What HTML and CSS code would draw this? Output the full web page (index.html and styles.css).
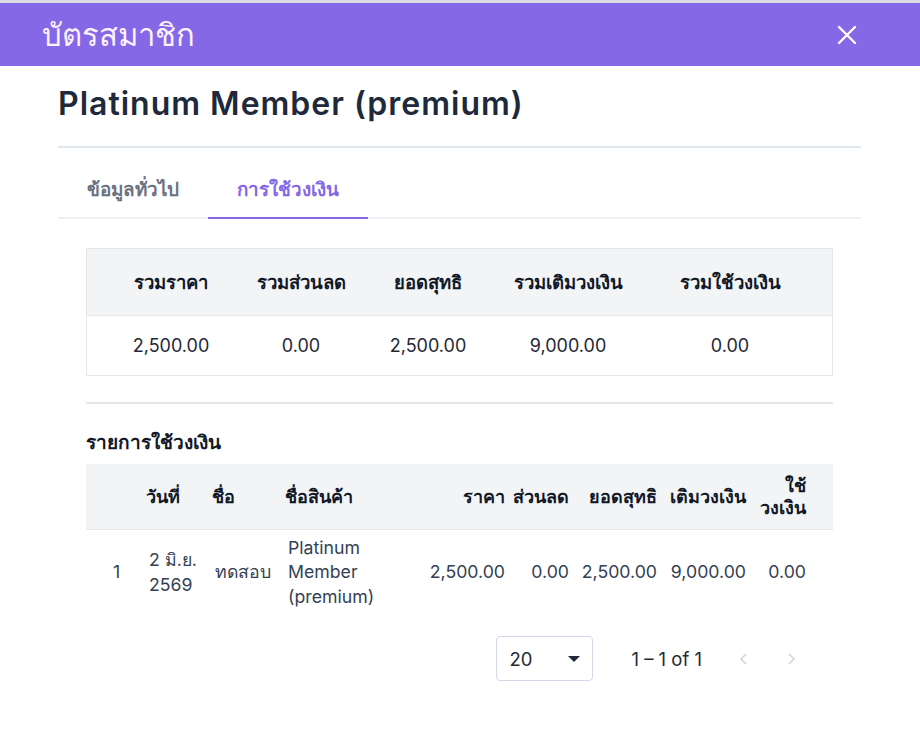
FILE: index.html
```html
<!DOCTYPE html>
<html lang="th">
<head>
    <meta charset="UTF-8">
    <meta name="viewport" content="width=device-width, initial-scale=1.0">
    <title>บัตรสมาชิก</title>
    <link rel="stylesheet" href="styles.css">
</head>
<body>
    <div class="dialog">
        <div class="dialog-header">
            <span class="dialog-title">บัตรสมาชิก</span>
            <svg class="close-icon" width="20" height="20" viewBox="0 0 20 20">
                <path d="M2 2 L18 18 M18 2 L2 18" stroke="#fff" stroke-width="2.4" stroke-linecap="round"/>
            </svg>
        </div>

        <div class="dialog-body">
            <h1 class="card-name">Platinum Member (premium)</h1>

            <div class="tabs">
                <div class="tab">ข้อมูลทั่วไป</div>
                <div class="tab active">การใช้วงเงิน</div>
            </div>

            <div class="tab-panel">
                <!-- summary -->
                <div class="summary">
                    <div class="summary-row summary-head">
                        <div>รวมราคา</div>
                        <div>รวมส่วนลด</div>
                        <div>ยอดสุทธิ</div>
                        <div>รวมเติมวงเงิน</div>
                        <div>รวมใช้วงเงิน</div>
                    </div>
                    <div class="summary-row summary-values">
                        <div>2,500.00</div>
                        <div>0.00</div>
                        <div>2,500.00</div>
                        <div>9,000.00</div>
                        <div>0.00</div>
                    </div>
                </div>

                <hr class="divider">

                <h2 class="section-title">รายการใช้วงเงิน</h2>

                <!-- usage list -->
                <table class="usage">
                    <colgroup>
                        <col style="width: 56px">
                        <col style="width: 66px">
                        <col style="width: 73px">
                        <col style="width: 114px">
                        <col style="width: 114px">
                        <col style="width: 64px">
                        <col style="width: 88px">
                        <col style="width: 89px">
                        <col style="width: 83px">
                    </colgroup>
                    <thead>
                        <tr>
                            <th class="col-no"></th>
                            <th>วันที่</th>
                            <th>ชื่อ</th>
                            <th>ชื่อสินค้า</th>
                            <th class="num">ราคา</th>
                            <th class="num">ส่วนลด</th>
                            <th class="num">ยอดสุทธิ</th>
                            <th class="num">เติมวงเงิน</th>
                            <th class="num col-used">ใช้วงเงิน</th>
                        </tr>
                    </thead>
                    <tbody>
                        <tr>
                            <td class="col-no">1</td>
                            <td>2 มิ.ย. 2569</td>
                            <td>ทดสอบ</td>
                            <td>Platinum Member (premium)</td>
                            <td class="num">2,500.00</td>
                            <td class="num">0.00</td>
                            <td class="num">2,500.00</td>
                            <td class="num">9,000.00</td>
                            <td class="num col-used">0.00</td>
                        </tr>
                    </tbody>
                </table>

                <div class="pagination">
                    <div class="page-size">
                        <span>20</span>
                        <span class="caret"></span>
                    </div>
                    <span class="page-range">1 – 1 of 1</span>
                    <svg class="page-arrow" width="12" height="14" viewBox="0 0 12 14">
                        <path d="M8 2 L3 7 L8 12" fill="none" stroke="#d1d5db" stroke-width="1.6"/>
                    </svg>
                    <svg class="page-arrow" width="12" height="14" viewBox="0 0 12 14">
                        <path d="M4 2 L9 7 L4 12" fill="none" stroke="#d1d5db" stroke-width="1.6"/>
                    </svg>
                </div>
            </div>
        </div>
    </div>
</body>
</html>
```

FILE: styles.css
```css
body {
    margin: 0;
    font-family: Inter, "Noto Sans", sans-serif;
    background-color: #fff;
    color: #1f2937;
}
.dialog {
    border-top: 3px solid #d8dbe2;
}
.dialog-header {
    background-color: #8468e6;
    height: 63px;
    display: flex;
    align-items: center;
    justify-content: space-between;
    padding: 0 63px 0 42px;
}
.dialog-title {
    color: #fdf0ff;
    font-size: 31px;
}
.dialog-body {
    padding: 0 59px 0 58px;
}
.card-name {
    margin: 0;
    padding: 19px 0 23px;
    font-size: 32px;
    font-weight: 600;
    letter-spacing: 1px;
    color: #1e293b;
    border-bottom: 2px solid #e2e8f0;
    line-height: 38px;
}
.tabs {
    display: flex;
    margin-top: 10px;
    border-bottom: 2px solid #eceff3;
}
.tab {
    padding: 20px 29px 15px;
    font-size: 18.8px;
    line-height: 24px;
    font-weight: 600;
    color: #6b7280;
}
.tab.active {
    color: #8468e6;
    border-bottom: 2px solid #8468e6;
    margin-bottom: -2px;
}
.tab-panel {
    padding: 29px 28px 0;
}
.summary {
    border: 1px solid #e5e7eb;
}
.summary-row {
    display: grid;
    grid-template-columns: 130px 130px 124px 156px 168px;
    padding-left: 19px;
    align-items: center;
    text-align: center;
}
.summary-head {
    background-color: #f3f4f6;
    height: 66px;
    font-size: 18.5px;
    font-weight: 700;
    color: #111827;
    border-bottom: 1px solid #e5e7eb;
}
.summary-values {
    height: 59px;
    font-size: 18px;
    color: #1f2937;
}
.divider {
    border: none;
    border-top: 2px solid #e5e7eb;
    margin: 26px 0 0;
}
.section-title {
    margin: 26px 0 8px;
    font-size: 19px;
    line-height: 26px;
    font-weight: 700;
    color: #111827;
}
.usage {
    width: 100%;
    table-layout: fixed;
    border-collapse: collapse;
}
.usage th {
    background-color: #f3f4f6;
    height: 65px;
    font-size: 18px;
    font-weight: 700;
    color: #111827;
    text-align: left;
    padding: 0 4px;
    line-height: 22px;
    border-bottom: 1px solid #e5e7eb;
}
.usage td {
    height: 85px;
    font-size: 17.7px;
    color: #334155;
    padding: 0 4px 0 7px;
    line-height: 24.5px;
}
.usage .num {
    text-align: right;
}
.usage .col-no {
    padding-left: 27px;
}
.usage .col-used {
    padding-right: 27px;
}
.pagination {
    display: flex;
    align-items: center;
    justify-content: flex-end;
    margin-top: 21px;
    padding-right: 36px;
}
.page-size {
    width: 97px;
    height: 45px;
    box-sizing: border-box;
    border: 1px solid #d1d9e6;
    border-radius: 4px;
    display: flex;
    align-items: center;
    justify-content: space-between;
    padding: 0 12px;
    font-size: 18.5px;
    color: #1f2937;
}
.caret {
    width: 0;
    height: 0;
    border-left: 6px solid transparent;
    border-right: 6px solid transparent;
    border-top: 6px solid #1f2937;
}
.page-range {
    margin: 0 36px 0 38px;
    font-size: 18.5px;
    color: #1f2937;
}
.page-arrow + .page-arrow {
    margin-left: 35px;
}
```
